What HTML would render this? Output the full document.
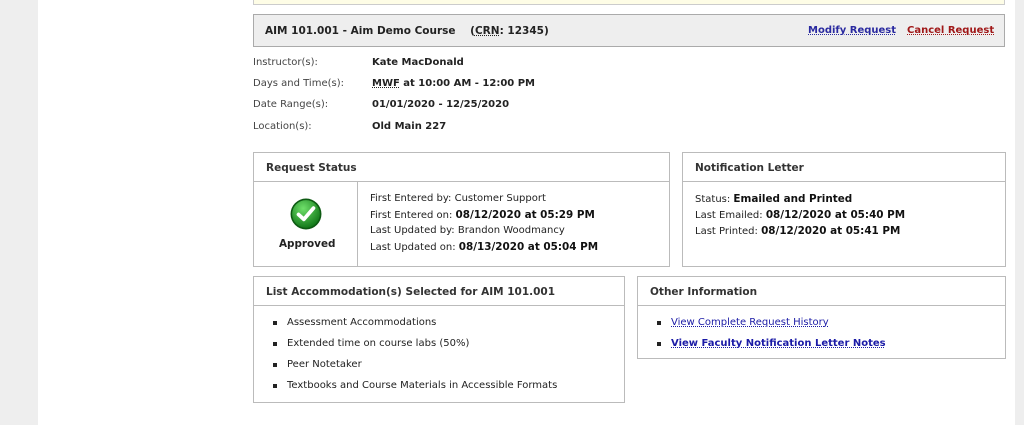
<!DOCTYPE html>
<html><head><meta charset="utf-8"><style>
*{margin:0;padding:0;box-sizing:border-box}
body{width:1024px;height:425px;background:#fff;position:relative;overflow:hidden;font-family:"DejaVu Sans","Liberation Sans",sans-serif;font-size:10px;color:#222}
.a{position:absolute;white-space:nowrap}
.box{position:absolute;border:1px solid #bbb;background:#fff}
.hd{position:absolute;left:0;right:0;top:0;height:29px;border-bottom:1px solid #bbb;font-weight:bold;font-size:10.5px;color:#333;padding:9px 0 0 12px}
b{font-weight:bold;color:#111;font-size:10.4px}
.lbl{color:#444}
ul{list-style:none}
li{position:absolute;white-space:nowrap}
li:before{content:"";position:absolute;left:-14px;top:4px;width:4px;height:4px;background:#222}
a{color:#1a1aa6;text-decoration:underline dotted}
</style></head><body>
<div class="a" style="left:0;top:0;width:38px;height:425px;background:#eeeeee"></div>
<div class="a" style="left:1015px;top:0;width:9px;height:425px;background:#eeeeee"></div>
<div class="a" style="left:253px;top:-2px;width:752px;height:7px;background:#fefde6;border:1px solid #ccc"></div>
<div class="a" style="left:253px;top:14px;width:752px;height:33px;background:#eeeeee;border:1px solid #aaa"></div>
<div class="a" style="left:265px;top:25px;font-weight:bold;font-size:10.5px;color:#222">AIM 101.001 - Aim Demo Course &nbsp;&nbsp; (<span style="text-decoration:underline dotted">CRN</span>: 12345)</div>
<div class="a" style="left:808px;top:25px;font-weight:bold;font-size:10px"><a style="color:#2a2aa0">Modify Request</a></div>
<div class="a" style="left:907px;top:25px;font-weight:bold;font-size:10px"><a style="color:#a01818;text-decoration-color:#a01818">Cancel Request</a></div>

<div class="a lbl" style="left:253px;top:57px">Instructor(s):</div>
<div class="a lbl" style="left:253px;top:78px">Days and Time(s):</div>
<div class="a lbl" style="left:253px;top:99px">Date Range(s):</div>
<div class="a lbl" style="left:253px;top:121px">Location(s):</div>
<div class="a" style="left:372px;top:57px;font-weight:bold">Kate MacDonald</div>
<div class="a" style="left:372px;top:78px;font-weight:bold"><span style="text-decoration:underline dotted">MWF</span> at 10:00 AM - 12:00 PM</div>
<div class="a" style="left:372px;top:99px;font-weight:bold">01/01/2020 - 12/25/2020</div>
<div class="a" style="left:372px;top:121px;font-weight:bold">Old Main 227</div>

<div class="box" style="left:253px;top:152px;width:417px;height:115px">
<div class="hd">Request Status</div>
<div class="a" style="left:103px;top:29px;width:1px;height:85px;background:#bbb"></div>
<svg class="a" style="left:36px;top:45px" width="32" height="32" viewBox="0 0 30 30"><defs><radialGradient id="g" cx="40%" cy="30%" r="70%"><stop offset="0" stop-color="#6fe06a"/><stop offset="1" stop-color="#137a1a"/></radialGradient></defs><circle cx="15" cy="15" r="14.5" fill="#0d5a12"/><circle cx="15" cy="15" r="13" fill="url(#g)"/><path d="M8 15.5 L13 20 L22 9.5" fill="none" stroke="#fff" stroke-width="3.5" stroke-linecap="round" stroke-linejoin="round"/></svg>
<div class="a" style="left:25px;top:85px;font-weight:bold;color:#222;font-size:10.4px">Approved</div>
<div class="a" style="left:116px;top:40px">First Entered by: Customer Support</div>
<div class="a" style="left:116px;top:56px">First Entered on: <b>08/12/2020 at 05:29 PM</b></div>
<div class="a" style="left:116px;top:72px">Last Updated by: Brandon Woodmancy</div>
<div class="a" style="left:116px;top:88px">Last Updated on: <b>08/13/2020 at 05:04 PM</b></div>
</div>

<div class="box" style="left:682px;top:152px;width:324px;height:115px">
<div class="hd">Notification Letter</div>
<div class="a" style="left:12px;top:40px">Status: <b>Emailed and Printed</b></div>
<div class="a" style="left:12px;top:56px">Last Emailed: <b>08/12/2020 at 05:40 PM</b></div>
<div class="a" style="left:12px;top:72px">Last Printed: <b>08/12/2020 at 05:41 PM</b></div>
</div>

<div class="box" style="left:253px;top:276px;width:372px;height:127px">
<div class="hd">List Accommodation(s) Selected for AIM 101.001</div>
<ul>
<li style="left:33px;top:40px">Assessment Accommodations</li>
<li style="left:33px;top:61px">Extended time on course labs (50%)</li>
<li style="left:33px;top:82px">Peer Notetaker</li>
<li style="left:33px;top:103px">Textbooks and Course Materials in Accessible Formats</li>
</ul>
</div>

<div class="box" style="left:637px;top:276px;width:369px;height:83px">
<div class="hd">Other Information</div>
<ul>
<li style="left:33px;top:40px"><a>View Complete Request History</a></li>
<li style="left:33px;top:61px;font-weight:bold"><a>View Faculty Notification Letter Notes</a></li>
</ul>
</div>
</body></html>
